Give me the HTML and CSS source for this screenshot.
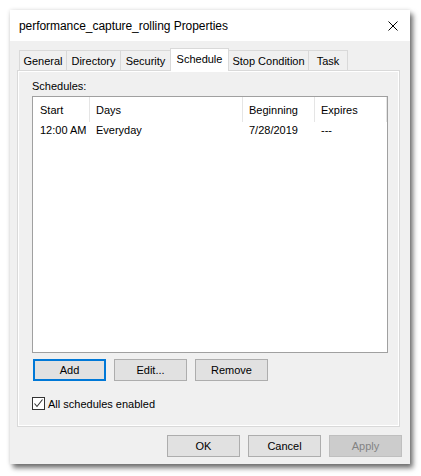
FILE: index.html
```html
<!DOCTYPE html>
<html>
<head>
<meta charset="utf-8">
<link rel="stylesheet" href="styles.css">
</head>
<body>
<div class="window">
  <div class="titlebar">
    <span class="title">performance_capture_rolling Properties</span>
    <svg class="close" width="10" height="10" viewBox="0 0 10 10"><path d="M0.5 0.5 L9.5 9.5 M9.5 0.5 L0.5 9.5" stroke="#000" stroke-width="1" fill="none"/></svg>
  </div>
  <div class="client">
    <div class="tabs">
      <div class="tab t-general">General</div>
      <div class="tab t-directory">Directory</div>
      <div class="tab t-security">Security</div>
      <div class="tab selected t-schedule">Schedule</div>
      <div class="tab t-stop">Stop Condition</div>
      <div class="tab t-task">Task</div>
    </div>
    <div class="panel">
      <div class="label">Schedules:</div>
      <div class="list">
        <div class="lhead">
          <div class="col c1">Start</div>
          <div class="col c2">Days</div>
          <div class="col c3">Beginning</div>
          <div class="col c4">Expires</div>
        </div>
        <div class="lrow">
          <div class="col c1">12:00 AM</div>
          <div class="col c2">Everyday</div>
          <div class="col c3">7/28/2019</div>
          <div class="col c4">---</div>
        </div>
      </div>
      <div class="btnrow">
        <div class="btn default">Add</div>
        <div class="btn">Edit...</div>
        <div class="btn">Remove</div>
      </div>
      <div class="check">
        <span class="box"><svg width="11" height="11" viewBox="0 0 11 11"><path d="M1.5 5.5 L4 8.5 L9.5 1.5" stroke="#333" stroke-width="1.1" fill="none"/></svg></span>
        <span>All schedules enabled</span>
      </div>
    </div>
    <div class="footer">
      <div class="btn">OK</div>
      <div class="btn">Cancel</div>
      <div class="btn disabled">Apply</div>
    </div>
  </div>
</div>
</body>
</html>
```
FILE: styles.css
```css
html, body {
  margin: 0;
  padding: 0;
  background: #ffffff;
}
body {
  font-family: "Liberation Sans", Arial, sans-serif;
  font-size: 11px;
  color: #000;
  padding: 10px 0 12px 10px;
}
.window {
  width: 400px;
  height: 454px;
  box-sizing: border-box;
  background: #f0f0f0;
  box-shadow: 3px 4px 5px rgba(0,0,0,0.55), 0 0 4px rgba(0,0,0,0.12);
  display: flex;
  flex-direction: column;
}
.titlebar {
  height: 31px;
  background: #ffffff;
  display: flex;
  align-items: center;
  justify-content: space-between;
  padding: 0 12px 0 9px;
  flex: none;
}
.title {
  font-size: 12px;
  letter-spacing: -0.05px;
  color: #000;
  padding-top: 1px;
}
.close {
  display: block;
}
.client {
  flex: 1;
  display: flex;
  flex-direction: column;
  padding: 7px 10px 0 7px;
}
.tabs {
  display: flex;
  align-items: flex-end;
  height: 22px;
  padding-left: 2px;
  position: relative;
  z-index: 1;
}
.tab {
  height: 20px;
  box-sizing: border-box;
  border: 1px solid #d9d9d9;
  border-bottom: none;
  border-left: none;
  background: #f0f0f0;
  display: flex;
  align-items: center;
  justify-content: center;
}
.tab:first-child { border-left: 1px solid #d9d9d9; }
.t-general { width: 48px; }
.t-directory { width: 54px; }
.t-security { width: 50px; }
.t-schedule { width: 59px; }
.t-stop { width: 80px; }
.t-task { width: 39px; }
.tab.selected {
  height: 23px;
  margin-bottom: -1px;
  background: #ffffff;
  border-left: 1px solid #d9d9d9;
  margin-left: -1px;
  padding-bottom: 2px;
}
.panel {
  height: 357px;
  box-sizing: border-box;
  border: 1px solid #d9d9d9;
  background: #f0f0f0;
  box-shadow: inset 1px 1px 0 #ffffff, inset -1px -1px 0 #ffffff;
  padding: 6px 11px 0 14px;
  display: flex;
  flex-direction: column;
}
.label {
  height: 19px;
  line-height: 19px;
}
.list {
  height: 257px;
  box-sizing: border-box;
  border: 1px solid #a0a0a0;
  background: #ffffff;
}
.lhead, .lrow {
  display: flex;
}
.lhead {
  height: 25px;
}
.lhead .col {
  height: 25px;
  line-height: 27px;
  border-right: 1px solid #e5e5e5;
}
.lrow {
  height: 17px;
  line-height: 17px;
}
.col {
  padding-left: 6px;
  box-sizing: border-box;
}
.c1 { width: 57px; padding-left: 7px; }
.c2 { width: 153px; }
.c3 { width: 72px; }
.c4 { width: 72px; }
.btnrow {
  display: flex;
  gap: 8px;
  margin-top: 6px;
  padding-left: 1px;
}
.btn {
  width: 73px;
  height: 22px;
  box-sizing: border-box;
  border: 1px solid #adadad;
  background: #e1e1e1;
  display: flex;
  align-items: center;
  justify-content: center;
}
.btn.default {
  border: 2px solid #0078d7;
}
.btn.disabled {
  background: #cccccc;
  border-color: #bfbfbf;
  color: #838383;
}
.check {
  display: flex;
  align-items: center;
  gap: 3px;
  margin-top: 16px;
}
.box {
  width: 13px;
  height: 13px;
  box-sizing: border-box;
  border: 1px solid #333333;
  background: #ffffff;
  display: flex;
  align-items: center;
  justify-content: center;
}
.box svg { display: block; }
.footer {
  display: flex;
  justify-content: flex-end;
  gap: 8px;
  margin-top: 8px;
  margin-right: -2px;
}
```
